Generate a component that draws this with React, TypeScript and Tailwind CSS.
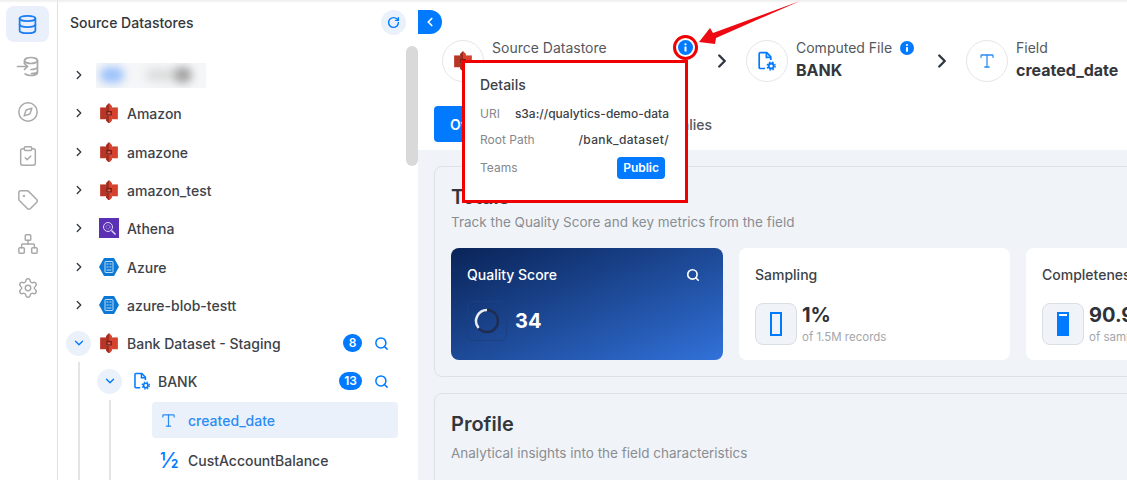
import { ChevronDown, ChevronLeft, ChevronRight, ClipboardCheck, Compass, Database, Network, RotateCw, Search, Settings, Tag, Type } from "lucide-react";
import type { ReactNode } from "react";

const FONT = "font-['Inter','Noto_Sans',sans-serif]";

function BucketIcon({ size = 18 }: { size?: number }) {
  return (
    <svg width={size} height={size * 1.15} viewBox="0 0 18 21" className="shrink-0">
      <rect x="0" y="4.500" width="6" height="12" fill="#b93526" />
      <rect x="12" y="4.500" width="6" height="12" fill="#d5432f" />
      <path d="M6 3 9 0v8H6z" fill="#a32c1f" />
      <path d="M12 3 9 0v8h3z" fill="#d5432f" />
      <path d="M6 18l3 3v-8H6z" fill="#a32c1f" />
      <path d="M12 18l-3 3v-8h3z" fill="#d5432f" />
      <rect x="6" y="8" width="6" height="5" fill="#7c1d14" />
      <rect x="7.500" y="9.500" width="3" height="2" fill="#e8604f" />
    </svg>
  );
}

function AzureIcon() {
  return (
    <svg width="20" height="18" viewBox="0 0 20 18" className="shrink-0">
      <path d="M5 0h10l5 9-5 9H5L0 9z" fill="#0a78d4" />
      <rect x="6" y="3.500" width="8" height="11" rx="0.5" fill="none" stroke="#b9dcf7" strokeWidth="1" />
      <path d="M7.500 6h2M10.500 6h2M7.500 9h2M10.500 9h2M7.500 12h5" stroke="#b9dcf7" strokeWidth="1" />
    </svg>
  );
}

function AthenaIcon() {
  return (
    <svg width="20" height="20" viewBox="0 0 20 20" className="shrink-0">
      <rect width="20" height="20" fill="#5a30b5" />
      <circle cx="9" cy="9" r="4.500" fill="none" stroke="#e4d9fa" strokeWidth="1" />
      <circle cx="9" cy="9" r="2" fill="none" stroke="#e4d9fa" strokeWidth="0.8" strokeDasharray="1 1" />
      <path d="m12.500 12.500 4 4" stroke="#e4d9fa" strokeWidth="1.400" />
    </svg>
  );
}

function FileGearIcon({ size = 20 }: { size?: number }) {
  return (
    <svg width={size} height={size} viewBox="0 0 20 20" fill="none" className="shrink-0">
      <path d="M8 17.500H3.200a1 1 0 0 1-1-1V2.700a1 1 0 0 1 1-1h6.600l4 4.200v3" stroke="#017aff" strokeWidth="1.700" strokeLinejoin="round" />
      <path d="M9.400 1.700v4.600h4.400" stroke="#017aff" strokeWidth="1.700" />
      <circle cx="14.200" cy="15" r="2.500" stroke="#017aff" strokeWidth="1.900" />
      <circle cx="14.200" cy="15" r="4" stroke="#017aff" strokeWidth="1.300" strokeDasharray="1.600 1.600" />
    </svg>
  );
}

function InfoDot({ size = 15 }: { size?: number }) {
  return (
    <svg width={size} height={size} viewBox="0 0 16 16" className="shrink-0">
      <circle cx="8" cy="8" r="8" fill="#017aff" />
      <circle cx="8" cy="4.600" r="1.200" fill="#fff" />
      <rect x="6.900" y="6.800" width="2.200" height="5.400" rx="0.6" fill="#fff" />
    </svg>
  );
}

function TreeRow({ icon, label, blurred, className = "" }: { icon: ReactNode; label?: string; blurred?: boolean; className?: string }) {
  return (
    <div className={`flex h-[38px] items-center ${className}`}>
      <div className="flex w-[25px] justify-center">
        <ChevronRight size={14} strokeWidth={2.2} className="text-[#2f3742]" />
      </div>
      {blurred ? (
        <div className="ml-[5px] flex h-[25px] w-[110px] items-center overflow-hidden bg-[#f5f6f8]">
          <div className="ml-1 h-4 w-6 rounded-full bg-[#9cc2fb] blur-[4px]" />
          <div className="ml-[22px] h-3 w-[34px] rounded-full bg-[#dcdcdc] blur-[4px]" />
          <div className="-ml-[6px] h-4 w-[18px] rounded-full bg-[#a3a3a3] blur-[4px]" />
        </div>
      ) : (
        <>
          <div className="ml-[8px] flex w-[20px] justify-center">{icon}</div>
          <span className="ml-[8px] text-[14px] font-medium text-[#3d4248]">{label}</span>
        </>
      )}
    </div>
  );
}

function CountActions({ count, width }: { count: number; width: string }) {
  return (
    <div className="ml-auto mr-[9px] flex items-center gap-[12px]">
      <span className={`flex h-[18px] items-center justify-center rounded-full bg-[#017aff] text-[12px] font-semibold text-white ${width}`}>{count}</span>
      <Search size={15} strokeWidth={2.4} className="text-[#017aff]" />
    </div>
  );
}

function OpenToggle() {
  return (
    <div className="flex h-[25px] w-[25px] shrink-0 items-center justify-center rounded-full bg-[#eaf1fb]">
      <ChevronDown size={14} strokeWidth={2.4} className="text-[#017aff]" />
    </div>
  );
}

function Stat({ title, value, sub, filled }: { title: string; value: string; sub: string; filled?: boolean }) {
  return (
    <div className="h-[112px] w-[271px] shrink-0 rounded-lg bg-white px-4 pt-[17px]">
      <div className="text-[14px] font-medium leading-[20px] text-[#3d4248]">{title}</div>
      <div className="mt-[17px] flex items-center gap-[5px]">
        <div className="flex h-[42px] w-[42px] items-center justify-center rounded-lg border border-[#d8dfe7] bg-[#f0f4f9]">
          {filled ? (
            <div className="h-[24px] w-[12px] bg-[#017aff] pt-[2px]">
              <div className="mx-[2px] h-[2px] bg-white" />
            </div>
          ) : (
            <div className="h-[24px] w-[12px] border-2 border-[#017aff]" />
          )}
        </div>
        <div className="mt-[1px]">
          <div className="text-[20px] font-bold leading-[24px] text-[#2e3238]">{value}</div>
          <div className="mt-[2px] whitespace-nowrap text-[11.5px] leading-[16px] text-[#a3a6aa]">{sub}</div>
        </div>
      </div>
    </div>
  );
}

function Crumb({ icon, title, value, info, width }: { icon: ReactNode; title: string; value: string; info?: boolean; width: string }) {
  return (
    <div className={`flex shrink-0 items-center whitespace-nowrap ${width}`}>
      <div className="flex h-[42px] w-[42px] shrink-0 items-center justify-center rounded-full border border-[#e4e6e9] bg-white">{icon}</div>
      <div className="-mt-[3px] ml-[8px]">
        <div className="flex items-center gap-[8px] text-[14px] leading-[20px] text-[#54585e]">
          {title}
          {info && <InfoDot size={14} />}
        </div>
        <div className="mt-[1px] text-[16px] font-bold leading-[22px] text-[#33373c]">{value}</div>
      </div>
    </div>
  );
}

export default function App() {
  const railIcons = [Compass, ClipboardCheck, Tag, Network, Settings];
  return (
    <div className={`relative flex h-[480px] w-[1127px] overflow-hidden bg-white ${FONT}`}>
      <div className="absolute inset-x-0 top-0 z-10 h-[3px] bg-gradient-to-b from-[#ececec] to-transparent" />

      <aside className="flex w-[58px] shrink-0 flex-col items-center border-r border-[#e0e0e0] pr-[2px] pt-[6px]">
        <div className="flex h-9 w-[43px] items-center justify-center rounded-lg bg-[#e9f0fb]">
          <Database size={21} strokeWidth={2} className="text-[#1d7cf2]" />
        </div>
        <div className="mt-[14px] flex h-[22px] items-center justify-center text-[#a9a9a9]">
          <svg width="24" height="22" viewBox="0 0 24 22" fill="none" stroke="currentColor" strokeWidth="1.700" strokeLinecap="round">
            <ellipse cx="15" cy="4.500" rx="6.500" ry="3" />
            <path d="M8.500 4.500v3M21.500 4.500v12c0 1.700-3 3-6.500 3-2.500 0-4.700-.7-5.800-1.700M21.500 10.500c0 1.700-3 3-6.500 3M21.500 15c0 1.500-3 2.500-6 2.500" />
            <path d="M1.500 10.500h10M8.500 7.500l3 3-3 3" />
          </svg>
        </div>
        <div className="mt-[23px] flex flex-col items-center gap-[22px] text-[#a9a9a9]">
          {railIcons.map((Icon, i) => (
            <Icon key={i} size={22} strokeWidth={1.6} />
          ))}
        </div>
      </aside>

      <section className="relative w-[360px] shrink-0 pl-2 pr-5">
        <div className="flex h-[44px] items-center pl-[4px]">
          <h2 className="text-[14px] font-medium text-[#33373c]">Source Datastores</h2>
          <div className="ml-auto mr-[-8px] flex h-[25px] w-[25px] items-center justify-center rounded-full bg-[#eaf1fb]">
            <RotateCw size={13} strokeWidth={2.6} className="text-[#017aff]" />
          </div>
        </div>
        <div className="pt-[12px]">
          <TreeRow blurred icon={null} />
          <TreeRow icon={<BucketIcon />} label="Amazon" />
          <TreeRow className="mt-[1px]" icon={<BucketIcon />} label="amazone" />
          <TreeRow icon={<BucketIcon />} label="amazon_test" />
          <TreeRow icon={<AthenaIcon />} label="Athena" />
          <TreeRow className="mt-[1px]" icon={<AzureIcon />} label="Azure" />
          <TreeRow icon={<AzureIcon />} label="azure-blob-testt" />
          <div className="flex h-[38px] items-center">
            <OpenToggle />
            <div className="ml-[8px] flex w-[20px] justify-center"><BucketIcon /></div>
            <span className="ml-[8px] text-[14px] font-medium text-[#3d4248]">Bank Dataset - Staging</span>
            <CountActions count={8} width="w-[19px]" />
          </div>
          <div className="ml-[12px] border-l-2 border-[#e4e4e4] pl-[17px]">
            <div className="flex h-[38px] items-center">
              <OpenToggle />
              <div className="ml-[11px]"><FileGearIcon size={18} /></div>
              <span className="ml-[7px] text-[14px] font-medium text-[#3d4248]">BANK</span>
              <CountActions count={13} width="w-[23px]" />
            </div>
            <div className="ml-[12px] border-l-2 border-[#e4e4e4] pl-[41px] pt-[2px]">
              <div className="flex h-[36px] items-center rounded bg-[#eaf1fb] pl-[8px]">
                <Type size={17} strokeWidth={1.7} className="text-[#2b8cf5]" />
                <span className="ml-[11px] text-[14px] font-medium text-[#2b8cf5]">created_date</span>
              </div>
              <div className="flex h-[44px] items-center pl-[8px]">
                <span className="w-[17px] text-[22px] leading-none text-[#017aff]">½</span>
                <span className="ml-[11px] text-[14px] font-medium text-[#3d4248]">CustAccountBalance</span>
              </div>
            </div>
          </div>
        </div>
        <div className="absolute right-0 top-[46px] h-[120px] w-[12px] rounded-md bg-[#d9d9d9]" />
      </section>

      <main className="relative min-w-0 flex-1 overflow-hidden bg-[#f0f4f9]">
        <div className="h-[150px] bg-white pl-[24px] pt-[39px]">
          <div className="flex h-[44px] items-center">
            <Crumb icon={<BucketIcon size={18} />} title="Source Datastore" value="Bank Dataset" width="w-[269px]" />
            <ChevronRight size={22} strokeWidth={2.6} className="shrink-0 text-[#2f3742]" />
            <div className="ml-[13px]">
              <Crumb icon={<FileGearIcon size={20} />} title="Computed File" value="BANK" info width="w-[185px]" />
            </div>
            <ChevronRight size={22} strokeWidth={2.6} className="shrink-0 text-[#2f3742]" />
            <div className="ml-[13px]">
              <Crumb icon={<Type size={18} strokeWidth={1.7} className="text-[#2b8cf5]" />} title="Field" value="created_date" width="w-[161px]" />
            </div>
          </div>
          <div className="-ml-[8px] mt-[23px] flex items-center">
            <div className="flex h-9 w-[100px] items-center rounded bg-[#017aff] pl-4 text-[14px] font-semibold text-white">Overview</div>
            <span className="ml-[108px] text-[14px] font-medium text-[#54585e]">Anomalies</span>
          </div>
        </div>

        <div className="flex w-[900px] flex-col gap-4 pl-4 pt-4">
          <div className="h-[211px] rounded-lg border border-[#dde2e9] px-4 pt-[15px]">
            <h3 className="text-[20px] font-semibold leading-[30px] text-[#33373c]">Totals</h3>
            <p className="text-[13.5px] leading-[20px] text-[#8a8d91]">Track the Quality Score and key metrics from the field</p>
            <div className="mt-4 flex gap-4">
              <div className="h-[112px] w-[272px] shrink-0 rounded-lg bg-gradient-to-br from-[#0a2458] to-[#3272da] px-4 pt-[17px] text-white">
                <div className="flex items-center justify-between pr-[7px]">
                  <span className="text-[14px] font-medium leading-[20px]">Quality Score</span>
                  <Search size={14} strokeWidth={2.8} />
                </div>
                <div className="mt-[16px] flex items-center gap-[8px]">
                  <div className="flex h-10 w-10 items-center justify-center rounded-md border border-[#1c3f7f]">
                    <svg width="26" height="26" viewBox="0 0 26 26" fill="none">
                      <circle cx="13" cy="13" r="11" stroke="#1f2d52" strokeWidth="2.500" />
                      <path d="M13 2A11 11 0 0 0 4.600 20" stroke="#e8edf5" strokeWidth="2.500" />
                    </svg>
                  </div>
                  <span className="text-[20px] font-bold">34</span>
                </div>
              </div>
              <Stat title="Sampling" value="1%" sub="of 1.5M records" />
              <Stat title="Completeness" value="90.9%" sub="of sampled" filled />
            </div>
          </div>
          <div className="h-[200px] rounded-lg border border-[#dde2e9] px-4 pt-[15px]">
            <h3 className="text-[20px] font-semibold leading-[30px] text-[#33373c]">Profile</h3>
            <p className="mt-[4px] text-[13.5px] leading-[20px] text-[#8a8d91]">Analytical insights into the field characteristics</p>
          </div>
        </div>

        <div className="absolute left-0 top-[10px] flex h-6 w-6 items-center justify-center rounded-r-full bg-[#017aff]">
          <ChevronLeft size={14} strokeWidth={3} className="text-white" />
        </div>
      </main>

      {/* annotation layer */}
      <div className="absolute left-[462px] top-[60px] z-20 h-[143px] w-[226px] border-[3px] border-[#f00000] bg-white pl-[15px] pr-[16px] pt-[12px]">
        <div className="text-[14px] font-medium leading-[20px] text-[#3d4248]">Details</div>
        <div className="mt-[9px] flex h-[20px] items-center justify-between text-[12px]">
          <span className="text-[#85888c]">URI</span>
          <span className="font-medium text-[#3d4248]">s3a://qualytics-demo-data</span>
        </div>
        <div className="mt-[6px] flex h-[20px] items-center justify-between text-[12px]">
          <span className="text-[#85888c]">Root Path</span>
          <span className="font-medium tracking-[0.03em] text-[#3d4248]">/bank_dataset/</span>
        </div>
        <div className="mt-[8px] flex h-[20px] items-center justify-between text-[12px]">
          <span className="text-[#85888c]">Teams</span>
          <span className="mr-[4px] rounded bg-[#017aff] px-[6px] py-[2px] font-semibold text-white">Public</span>
        </div>
      </div>
      <div className="absolute left-[673px] top-[35px] z-20 flex h-[25px] w-[25px] items-center justify-center rounded-full border-[3px] border-[#f00000] bg-white">
        <InfoDot size={15} />
      </div>
      <svg className="absolute left-[695px] top-0 z-20" width="110" height="50" viewBox="0 0 110 50">
        <path d="M4 42 15 28l3 5L105 1 21 38l-1 6z" fill="#ee0a12" />
      </svg>
    </div>
  );
}
